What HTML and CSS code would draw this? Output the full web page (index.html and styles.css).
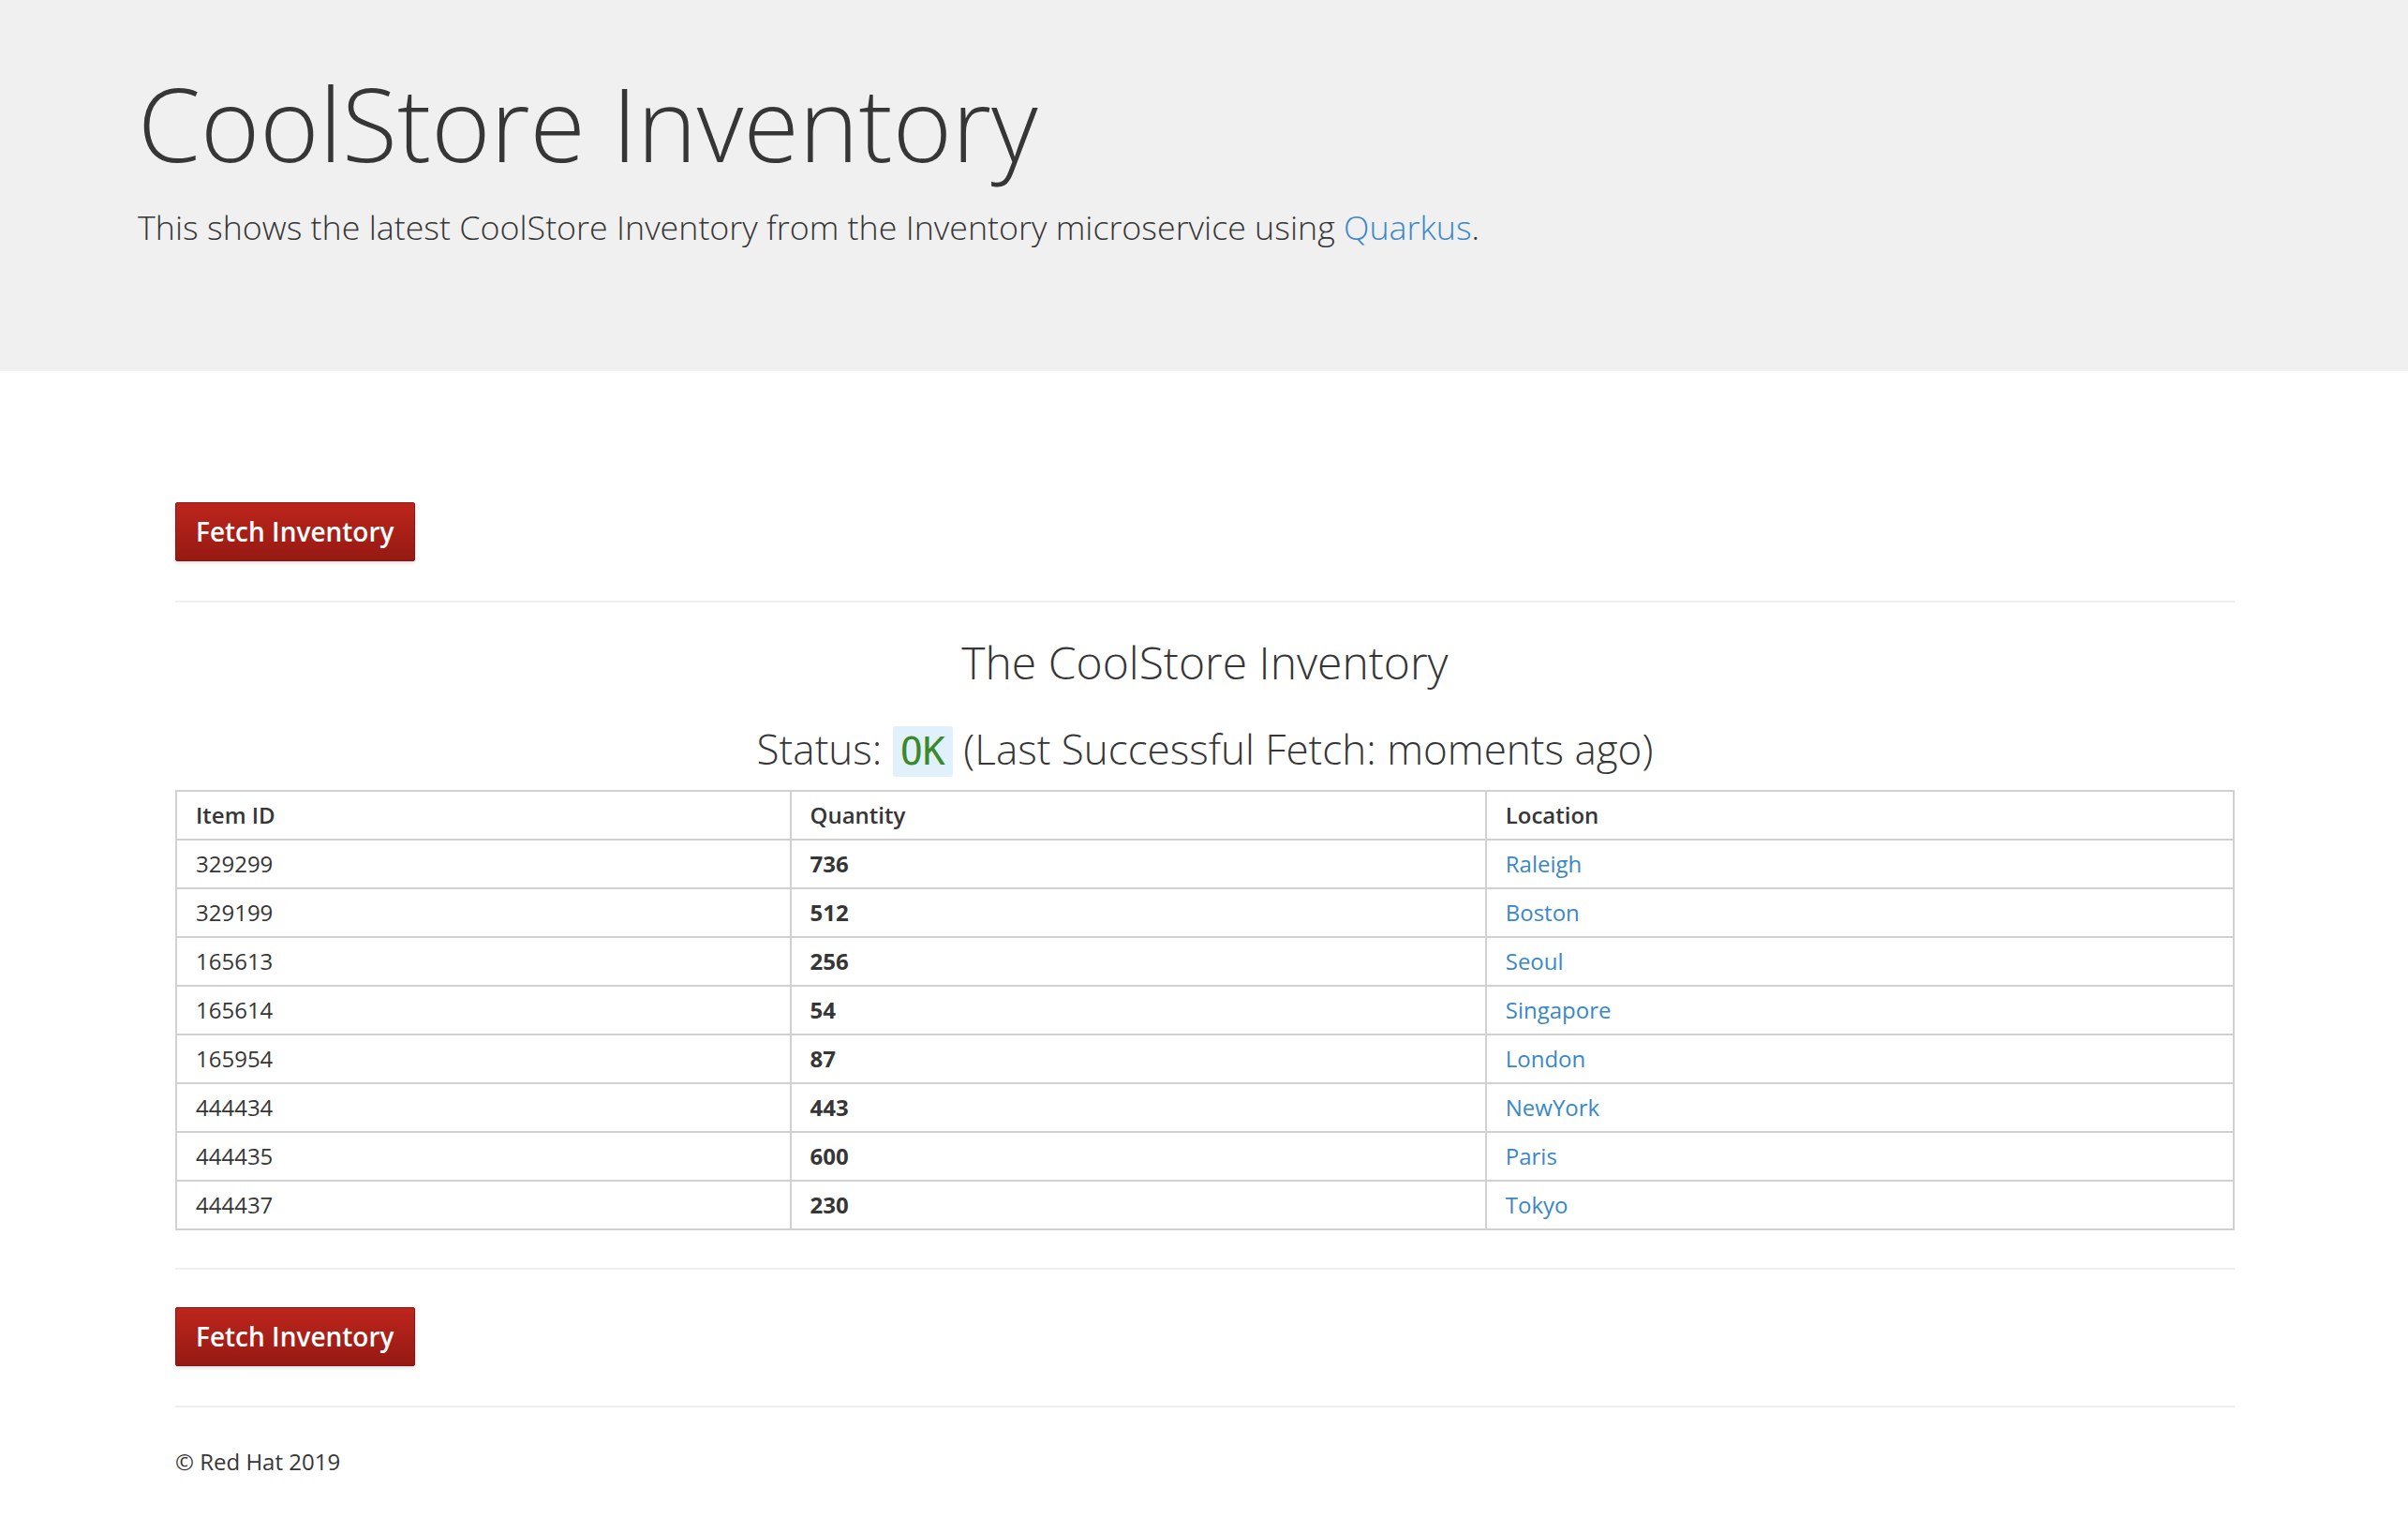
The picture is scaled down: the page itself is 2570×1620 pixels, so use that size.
FILE: index.html
```
<!DOCTYPE html>
<html lang="en">
<head>
<meta charset="utf-8">
<title>CoolStore Inventory</title>
<link rel="stylesheet" href="styles.css">
</head>
<body>
<header class="jumbotron">
  <h1 class="jumbo-title">CoolStore Inventory</h1>
  <p class="jumbo-lead">This shows the latest CoolStore Inventory from the Inventory microservice using <a href="#" class="link">Quarkus</a>.</p>
</header>
<main class="content">
  <div class="actions"><button class="btn-danger" type="button">Fetch Inventory</button></div>
  <hr class="rule">
  <h3 class="section-title">The CoolStore Inventory</h3>
  <h3 class="status">Status: <code class="status-ok">OK</code> (Last Successful Fetch: moments ago)</h3>
  <table class="inventory">
    <colgroup><col class="col-id"><col class="col-qty"><col class="col-loc"></colgroup>
    <thead>
      <tr><th>Item ID</th><th>Quantity</th><th>Location</th></tr>
    </thead>
    <tbody>
      <tr><td>329299</td><td class="qty">736</td><td><a href="#" class="link">Raleigh</a></td></tr>
      <tr><td>329199</td><td class="qty">512</td><td><a href="#" class="link">Boston</a></td></tr>
      <tr><td>165613</td><td class="qty">256</td><td><a href="#" class="link">Seoul</a></td></tr>
      <tr><td>165614</td><td class="qty">54</td><td><a href="#" class="link">Singapore</a></td></tr>
      <tr><td>165954</td><td class="qty">87</td><td><a href="#" class="link">London</a></td></tr>
      <tr><td>444434</td><td class="qty">443</td><td><a href="#" class="link">NewYork</a></td></tr>
      <tr><td>444435</td><td class="qty">600</td><td><a href="#" class="link">Paris</a></td></tr>
      <tr><td>444437</td><td class="qty">230</td><td><a href="#" class="link">Tokyo</a></td></tr>
    </tbody>
  </table>
  <hr class="rule rule-after-table">
  <div class="actions"><button class="btn-danger" type="button">Fetch Inventory</button></div>
  <hr class="rule">
  <footer class="footer">&copy; Red Hat 2019</footer>
</main>
</body>
</html>
```
FILE: styles.css
```
html, body {
  margin: 0;
  padding: 0;
  background: #ffffff;
}
body {
  font-family: "Open Sans", "Noto Sans", "Liberation Sans", sans-serif;
  color: #363636;
  width: 2570px;
}
.link {
  color: #3a87c9;
  text-decoration: none;
}
.jumbotron {
  background: #f0f0f0;
  height: 396px;
  box-sizing: border-box;
  padding: 72px 0 0 147px;
}
.jumbo-title {
  margin: 0;
  font-size: 108px;
  font-weight: 300;
  line-height: 119px;
  color: #363636;
}
.jumbo-lead {
  margin: 24px 0 0 0;
  font-size: 35.8px;
  font-weight: 300;
  line-height: 54px;
  color: #363636;
}
.content {
  padding: 140px 185px 60px 187px;
}
.actions {
  display: flex;
}
.btn-danger {
  font-family: "Open Sans", "Noto Sans", sans-serif;
  font-size: 28px;
  font-weight: 600;
  color: #ffffff;
  line-height: 39px;
  padding: 11px 21px;
  border: 1px solid #8a1410;
  border-radius: 2px;
  background: linear-gradient(to bottom, #bd251c 0%, #951a13 100%);
  box-shadow: 0 2px 4px rgba(0, 0, 0, 0.12);
  cursor: pointer;
}
.rule {
  border: 0;
  border-top: 2px solid #eeeeee;
  margin: 42px 0 37px 0;
  height: 0;
}
.rule-after-table {
  margin: 40px 0 40px 0;
}
.section-title {
  margin: 0;
  text-align: center;
  font-size: 48px;
  font-weight: 300;
  line-height: 53px;
  color: #363636;
}
.status {
  margin: 42px 0 20px 0;
  text-align: center;
  font-size: 44px;
  font-weight: 300;
  line-height: 48px;
  color: #363636;
}
.status-ok {
  font-family: "DejaVu Sans Mono", "Liberation Mono", monospace;
  font-size: 40px;
  line-height: 1;
  font-weight: 400;
  color: #3a8a2a;
  background: #e1f1fc;
  border-radius: 3px;
  padding: 4px 8px;
}
.inventory {
  width: 100%;
  border-collapse: collapse;
  border: 2px solid #d1d1d1;
  font-size: 24px;
  table-layout: fixed;
}
.col-id { width: 29.85%; }
.col-qty { width: 33.8%; }
.col-loc { width: 36.35%; }
.inventory th,
.inventory td {
  border: 2px solid #d1d1d1;
  padding: 5px 20px;
  line-height: 40px;
  text-align: left;
  vertical-align: middle;
}
.inventory th {
  font-weight: 600;
  color: #363636;
}
.inventory td {
  font-weight: 400;
}
.inventory td.qty {
  font-weight: 700;
}
.footer {
  font-size: 24px;
  line-height: 40px;
  margin-top: 38px;
}
```
